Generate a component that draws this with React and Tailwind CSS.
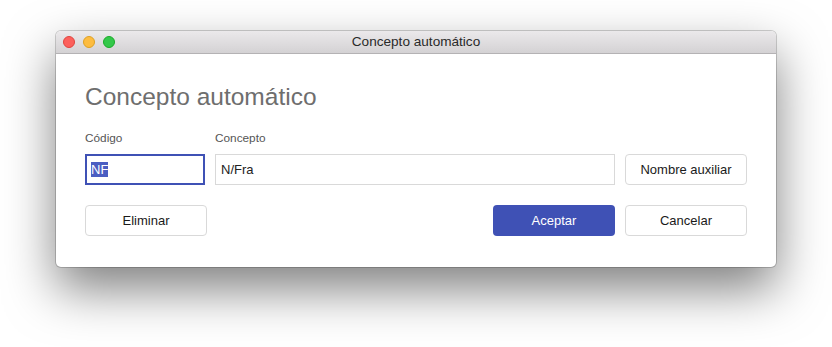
export default function App() {
  const font = { fontFamily: '"Liberation Sans", Arial, sans-serif' };
  return (
    <div className="w-[832px] h-[347px] bg-white pt-[31px] pl-[56px]" style={font}>
      <div className="w-[720px] h-[236px] flex flex-col bg-white rounded-[5px] shadow-[0_22px_50px_rgba(0,0,0,0.5),0_0_0_1px_rgba(0,0,0,0.18)]">
        <div className="relative h-[23px] flex items-center rounded-t-[5px] bg-gradient-to-b from-[#ebe9eb] to-[#d4d2d4] border-b border-[#b4b2b4]">
          <div className="flex items-center gap-[8px] pl-[7px]">
            <span className="w-[12px] h-[12px] rounded-full bg-[#fc605c] border border-[#e0443e]" />
            <span className="w-[12px] h-[12px] rounded-full bg-[#fdbc40] border border-[#dea123]" />
            <span className="w-[12px] h-[12px] rounded-full bg-[#34c84a] border border-[#1aab29]" />
          </div>
          <div className="absolute inset-0 flex items-center justify-center text-[13.6px] text-[#2a2a2a]">
            Concepto automático
          </div>
        </div>
        <div className="flex-1 flex flex-col px-[29px] pt-[29px]">
          <div className="text-[24.5px] leading-[28px] text-[#6e6e6e]">Concepto automático</div>
          <div className="flex gap-[10px] mt-[20px] text-[11.8px] leading-[14px] text-[#555]">
            <div className="w-[120px]">Código</div>
            <div>Concepto</div>
          </div>
          <div className="flex gap-[10px] mt-[9px] h-[31px]">
            <div className="w-[120px] h-full border-2 border-[#3f51b5] flex items-center pl-[4px] text-[13px] text-[#222]">
              <span className="bg-[#4b5ec2] text-white leading-[15px]">NF</span>
            </div>
            <div className="flex-1 h-full border border-[#d9d9d9] flex items-center pl-[5px] text-[13px] text-[#222]">
              N/Fra
            </div>
            <button className="w-[122px] h-full border border-[#d9d9d9] rounded-[4px] text-[13px] text-[#1a1a1a] bg-white">
              Nombre auxiliar
            </button>
          </div>
          <div className="flex gap-[10px] mt-[20px] h-[31px]">
            <button className="w-[122px] h-full border border-[#d9d9d9] rounded-[4px] text-[13px] text-[#1a1a1a] bg-white">
              Eliminar
            </button>
            <div className="flex-1" />
            <button className="w-[122px] h-full rounded-[4px] text-[13px] font-medium text-white bg-[#3f51b5]">
              Aceptar
            </button>
            <button className="w-[122px] h-full border border-[#d9d9d9] rounded-[4px] text-[13px] text-[#1a1a1a] bg-white">
              Cancelar
            </button>
          </div>
        </div>
      </div>
    </div>
  );
}
